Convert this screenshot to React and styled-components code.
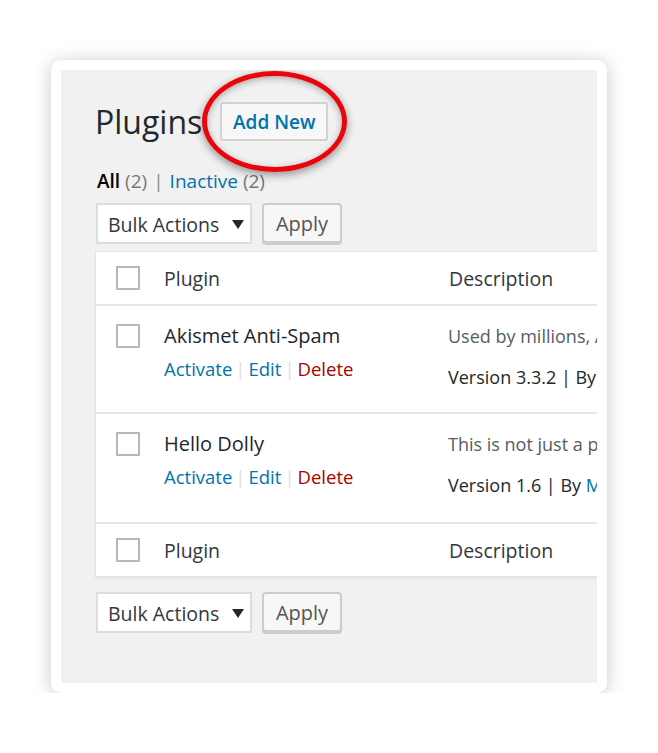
import React from "react";
import styled, { createGlobalStyle } from "styled-components";

const GlobalStyle = createGlobalStyle`
  body {
    margin: 0;
    background: #ffffff;
    font-family: "Open Sans", "Noto Sans", sans-serif;
  }
`;

const plugins = [
  {
    name: "Akismet Anti-Spam",
    desc: "Used by millions, Akismet is quite possibly the best way",
    version: "3.3.2",
    author: "Automattic",
    height: 108,
  },
  {
    name: "Hello Dolly",
    desc: "This is not just a plugin, it symbolizes the hope",
    version: "1.6",
    author: "Matt Mullenweg",
    height: 110,
  },
];

const Page = styled.div`
  padding: 60px 0 0 51px;
`;

const Card = styled.div`
  width: 556px;
  height: 633px;
  box-sizing: border-box;
  padding: 10px;
  background: #ffffff;
  border-radius: 10px;
  box-shadow: 0 2px 18px rgba(0, 0, 0, 0.22);
`;

const Screen = styled.div`
  height: 100%;
  box-sizing: border-box;
  background: #f1f1f1;
  overflow: hidden;
  padding: 32px 0 0 34px;
`;

const TitleRow = styled.div`
  display: flex;
  align-items: center;
  height: 39px;
`;

const Title = styled.h1`
  margin: 0 18px 0 0;
  font-size: 32px;
  font-weight: 400;
  line-height: 39px;
  color: #23282d;
`;

const AddWrap = styled.div`
  position: relative;
`;

const AddButton = styled.button`
  width: 108px;
  height: 39px;
  box-sizing: border-box;
  border: 2px solid #d2d2d2;
  border-radius: 3px;
  background: #f7f7f7;
  color: #0073aa;
  font-family: inherit;
  font-size: 19px;
  font-weight: 600;
  padding: 0;
  cursor: pointer;
`;

const Highlight = styled.div`
  position: absolute;
  left: -18px;
  top: -31px;
  width: 145px;
  height: 101px;
  box-sizing: border-box;
  border: 5px solid #e8060c;
  border-radius: 50%;
  box-shadow: 0 3px 9px rgba(0, 0, 0, 0.4), inset 0 2px 7px rgba(0, 0, 0, 0.3);
  pointer-events: none;
`;

const Filters = styled.div`
  margin: 28px 0 0 2px;
  font-size: 19px;
  line-height: 24px;
  color: #666;
`;

const Current = styled.span`
  color: #000;
  font-weight: 600;
`;

const Count = styled.span`
  color: #777;
`;

const Sep = styled.span`
  color: #888;
  margin: 0 6px;
`;

const FilterLink = styled.a`
  color: #0073aa;
  text-decoration: none;
`;

const BulkRow = styled.div`
  display: flex;
  align-items: flex-start;
  gap: 10px;
  margin: ${(p) => p.$top}px 0 0 1px;
`;

const Select = styled.div`
  display: flex;
  align-items: center;
  justify-content: space-between;
  width: 156px;
  height: 41px;
  box-sizing: border-box;
  padding: 1px 6px 0 10px;
  background: #ffffff;
  border: 2px solid #dddddd;
  font-size: 19.5px;
  color: #32373c;
`;

const Apply = styled.button`
  width: 80px;
  height: 40px;
  box-sizing: border-box;
  border: 2px solid #cccccc;
  border-radius: 4px;
  background: #f7f7f7;
  box-shadow: 0 2px 0 #cccccc;
  color: #555555;
  font-family: inherit;
  font-size: 20px;
  padding: 1px 0 0;
  cursor: pointer;
`;

const Table = styled.div`
  width: 600px;
  margin-top: 7px;
  background: #ffffff;
  border: 1px solid #e5e5e5;
  box-shadow: 0 2px 2px rgba(0, 0, 0, 0.05);
`;

const HeadRow = styled.div`
  display: flex;
  align-items: center;
  height: 52px;
  padding-left: 20px;
  border-bottom: ${(p) => (p.$foot ? "none" : "2px solid #e4e4e4")};
  font-size: 19.5px;
  color: #32373c;
`;

const Row = styled.div`
  display: flex;
  align-items: flex-start;
  box-sizing: border-box;
  min-height: ${(p) => p.$h}px;
  padding: 18px 0 0 20px;
  border-bottom: 2px solid #e4e4e4;
`;

const Check = styled.span`
  display: block;
  flex: none;
  width: 24px;
  height: 24px;
  box-sizing: border-box;
  border: 2px solid #b4b9be;
  background: #ffffff;
  margin-right: 24px;
`;

const NameCol = styled.div`
  width: 285px;
  flex: none;
`;

const DescCol = styled.div`
  white-space: nowrap;
  font-size: ${(p) => (p.$body ? 18 : 19.5)}px;
  margin-left: ${(p) => (p.$body ? -1 : 0)}px;
`;

const Name = styled.div`
  font-size: 20px;
  line-height: 24px;
  color: #23282d;
`;

const Actions = styled.div`
  margin-top: 9px;
  font-size: 18.5px;
  line-height: 24px;
`;

const Action = styled.a`
  color: ${(p) => (p.$danger ? "#a00" : "#0073aa")};
  text-decoration: none;
`;

const Pipe = styled.span`
  color: #ddd;
  margin: 0 3px;
`;

const DescText = styled.div`
  line-height: 24px;
  color: #555d66;
`;

const Meta = styled.div`
  margin-top: 17px;
  line-height: 24px;
  color: #23282d;
`;

const Author = styled.a`
  color: #0073aa;
  text-decoration: none;
`;

const Arrow = () => (
  <svg width="12" height="9" viewBox="0 0 12 9">
    <polygon points="0,0 12,0 6,9" fill="#23282d" />
  </svg>
);

const Bulk = ({ top }) => (
  <BulkRow $top={top}>
    <Select>
      <span>Bulk Actions</span>
      <Arrow />
    </Select>
    <Apply>Apply</Apply>
  </BulkRow>
);

export default function App() {
  return (
    <>
      <GlobalStyle />
      <Page>
        <Card>
          <Screen>
            <TitleRow>
              <Title>Plugins</Title>
              <AddWrap>
                <AddButton>Add New</AddButton>
                <Highlight />
              </AddWrap>
            </TitleRow>

            <Filters>
              <Current>All</Current> <Count>(2)</Count>
              <Sep>|</Sep>
              <FilterLink href="#">Inactive</FilterLink> <Count>(2)</Count>
            </Filters>

            <Bulk top={10} />

            <Table>
              <HeadRow>
                <Check />
                <NameCol>Plugin</NameCol>
                <DescCol>Description</DescCol>
              </HeadRow>
              {plugins.map((p) => (
                <Row key={p.name} $h={p.height}>
                  <Check />
                  <NameCol>
                    <Name>{p.name}</Name>
                    <Actions>
                      <Action href="#">Activate</Action>
                      <Pipe>|</Pipe>
                      <Action href="#">Edit</Action>
                      <Pipe>|</Pipe>
                      <Action href="#" $danger>
                        Delete
                      </Action>
                    </Actions>
                  </NameCol>
                  <DescCol $body>
                    <DescText>{p.desc}</DescText>
                    <Meta>
                      Version {p.version} | By <Author href="#">{p.author}</Author>
                    </Meta>
                  </DescCol>
                </Row>
              ))}
              <HeadRow $foot>
                <Check />
                <NameCol>Plugin</NameCol>
                <DescCol>Description</DescCol>
              </HeadRow>
            </Table>

            <Bulk top={15} />
          </Screen>
        </Card>
      </Page>
    </>
  );
}
